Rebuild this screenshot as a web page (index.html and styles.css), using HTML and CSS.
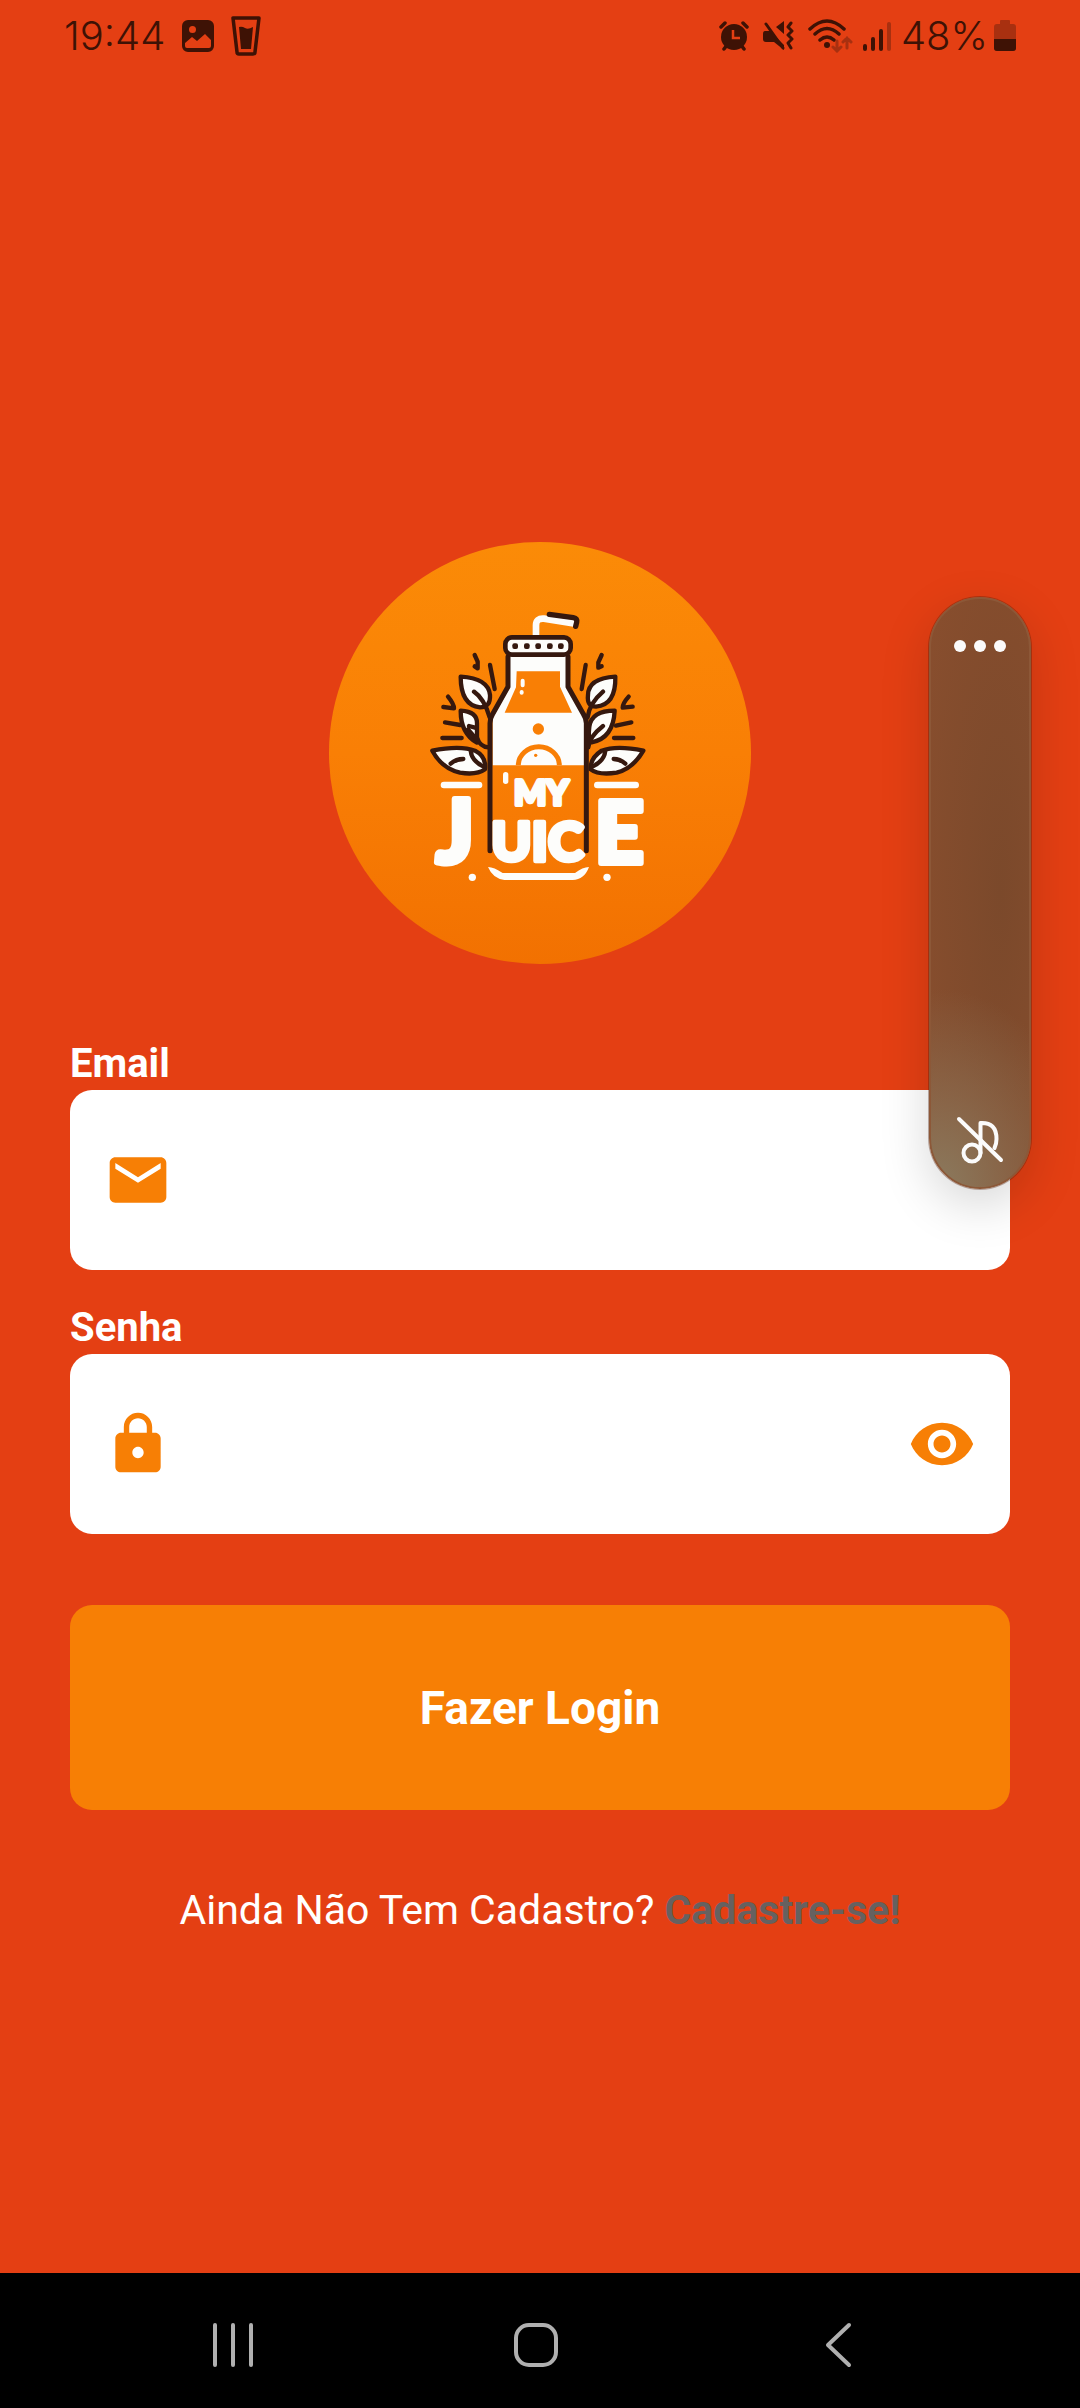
FILE: index.html
```html
<!DOCTYPE html>
<html lang="pt-BR">
<head>
<meta charset="utf-8">
<meta name="viewport" content="width=device-width, initial-scale=1">
<title>My Juice - Login</title>
<link rel="stylesheet" href="styles.css">
</head>
<body>
<div class="screen">
  <header class="status">
    <div class="status-left">
      <span class="status-text">19:44</span>
      <svg width="32" height="32" viewBox="0 0 32 32"><path fill="#3e1205" fill-rule="evenodd" d="M6 0h20a6 6 0 0 1 6 6v20a6 6 0 0 1-6 6H6a6 6 0 0 1-6-6V6a6 6 0 0 1 6-6zM10.500 6a3.500 3.500 0 1 0 0 7a3.500 3.500 0 0 0 0-7zM3 23v3q0 2 2 2h22q2 0 2-2v-6l-6-6l-8 7l-5-4z"/></svg>
      <svg width="30" height="40" viewBox="0 0 30 40"><path d="M2 2h26l-4 34q0 2-2 2H8q-2 0-2-2z" fill="none" stroke="#3e1205" stroke-width="3.500" stroke-linejoin="round"/><path fill="#3e1205" d="M8 11q3-1 6 1t8-1l-2 22h-10z"/></svg>
    </div>
    <div class="status-right">
      <svg width="30" height="30" viewBox="0 0 30 30"><g fill="none" stroke="#3e1205" stroke-width="3.500" stroke-linecap="round"><path d="M2 6l4-4M28 6l-4-4M5 28l3-4M25 28l-3-4"/></g><circle cx="15" cy="16" r="13" fill="#3e1205"/><path d="M14 9v8h7" fill="none" stroke="#e43f13" stroke-width="2.500"/></svg>
      <svg class="spaced" width="31" height="30" viewBox="0 0 31 30"><path fill="#3e1205" d="M2 10h5l14 14v5l-10-8H3q-3 0-3-3v-5q0-3 2-3zM13 6l8-6v13z"/><g fill="none" stroke="#3e1205" stroke-width="3" stroke-linecap="round" stroke-linejoin="round"><path d="M3 3l17 24M28 2l-3 4l4 4l-4 4l4 4l-4 4l3 5"/></g></svg>
      <svg class="spaced" width="45" height="34" viewBox="0 0 45 34"><g fill="none" stroke="#3e1205" stroke-width="3.500" stroke-linecap="round"><path d="M2 10q17-16 34 0M7 15q12-11 24 0M12 21q7-6 14 0"/></g><circle cx="19" cy="26" r="3" fill="#3e1205"/><g fill="none" stroke="#a83010" stroke-width="3" stroke-linecap="round"><path d="M29 22v10M25 28l4 4l4-4M39 29V19M35 23l4-4l4 4"/></g></svg>
      <svg width="28" height="31" viewBox="0 0 28 31"><g stroke="#3e1205" stroke-width="4" stroke-linecap="round"><path d="M2 25v3M10 18v10M18 10v18"/><path stroke="#a83010" d="M26 3v25"/></g></svg>
      <div class="battery">
        <span class="status-text">48%</span>
        <svg width="22" height="32" viewBox="0 0 22 32"><path fill="#a83010" d="M6 4V1q0-1 1-1h8q1 0 1 1v3h3q3 0 3 3v21q0 3-3 3H3q-3 0-3-3V7q0-3 3-3z"/><path fill="#3e1205" d="M0 19h22v9q0 3-3 3H3q-3 0-3-3z"/></svg>
      </div>
    </div>
  </header>

  <main class="login">
    <svg class="logo" viewBox="-273 -144 1266 1266" role="img" aria-label="My Juice">
      <defs><linearGradient id="orange" x1="0" y1="0" x2="0" y2="1"><stop offset="0" stop-color="#fb8b07"/><stop offset=".5" stop-color="#f97f05"/><stop offset="1" stop-color="#f27101"/></linearGradient></defs>
      <circle cx="360" cy="489" r="633" fill="url(#orange)"/>
      <path d="M348 140V106q0-22 24-20l94 15" fill="none" stroke="#fdfdfb" stroke-width="20"/>
      <path d="M388 73l72 10q12 2 10 14l-3 12" class="ink" stroke-width="16"/>
      <path d="M270 195V292L218 385V526H498V385L442 290V195z" fill="#fdfdfb"/>
      <path d="M290 244H420V290L456 368H254L288 292z" fill="#f97f05"/>
      <path d="M264 200V290L218 372Q210 385 210 400V782M444 200V290L490 372Q499 385 499 400V782" class="ink" stroke-width="15"/>
      <rect x="256" y="142" width="196" height="52" rx="20" fill="#fdfdfb" class="ink-line" stroke-width="14"/>
      <g fill="#35180f"><rect x="277" y="160" width="17" height="17" rx="6"/><rect x="312" y="160" width="17" height="17" rx="6"/><rect x="346" y="160" width="17" height="17" rx="6"/><rect x="381" y="160" width="17" height="17" rx="6"/><rect x="414" y="160" width="17" height="17" rx="6"/></g>
      <path d="M308 272v14M305 306v2" class="paper" stroke-width="12"/>
      <path d="M257 554v20" class="paper" stroke-width="16"/>
      <circle cx="355" cy="417" r="17" fill="#f97f05"/>
      <path d="M295 526a61 55 0 0 1 123 0" fill="none" stroke="#f97f05" stroke-width="15"/>
      <circle cx="347" cy="496" r="5" fill="#f97f05"/>
      <g class="ink" stroke-width="13">
        <path fill="#fdfdfb" d="M122 260Q205 265 210 315Q212 352 180 352Q122 345 122 260z"/>
        <path fill="#fdfdfb" d="M122 362Q172 365 171 400V458Q122 430 122 362z"/>
        <path fill="#fdfdfb" d="M37 482Q120 465 165 482Q200 500 195 538Q170 556 120 548Q65 535 37 482z"/>
        <path d="M162 305Q192 325 209 382M147 408l18 5M144 418l24 28M172 445Q180 470 205 472M92 521q16-14 38-14M152 482q3 32 40 48"/>
        <path d="M164 195l9 20v20l-9-6M210 225l14 72M84 320q18 22 18 35l-32-4M75 397l46 8M67 444h58"/>
        <path fill="#fdfdfb" d="M586 260Q505 265 504 315Q500 350 528 350Q588 345 586 260z"/>
        <path fill="#fdfdfb" d="M584 362Q515 362 508 410Q503 450 515 457Q580 445 584 362z"/>
        <path fill="#fdfdfb" d="M670 482Q590 465 545 482Q510 505 512 538Q535 556 590 548Q640 535 670 482z"/>
        <path d="M549 305Q508 340 503 382M549 408Q508 440 505 472M616 521q-16-14-35-14M556 482q-3 32-40 48"/>
        <path d="M545 195l-10 22v16l10-4M497 225l-12 72M626 320q-18 20-18 33l30-3M634 397l-46 10M640 444h-58"/>
      </g>
      <path d="M72 585H177M532 585H647" class="paper" stroke-width="20"/>
      <path d="M204 831Q222 831 248 849H465Q488 831 507 831Q493 869 458 870H253Q218 865 204 831z" fill="#fdfdfb"/>
      <circle cx="157" cy="862" r="11" fill="#fdfdfb"/><circle cx="561" cy="862" r="11" fill="#fdfdfb"/>
      <g class="brand">
        <text x="282" y="644" font-size="102" stroke-width="12">MY</text>
        <text x="48" y="820" font-size="264" stroke-width="18">J</text>
        <text x="214" y="812" font-size="162" stroke-width="14">UIC</text>
        <text x="524" y="820" font-size="256" stroke-width="18">E</text>
      </g>
    </svg>

    <form class="form">
      <label class="label" for="email">Email</label>
      <div class="field">
        <svg class="icon" viewBox="0 0 24 24"><path d="M20 4H4c-1.100 0-1.990.9-1.990 2L2 18c0 1.100.9 2 2 2h16c1.100 0 2-.9 2-2V6c0-1.100-.9-2-2-2zm0 4l-8 5-8-5V6l8 5 8-5v2z"/></svg>
        <input class="input" id="email" type="email">
      </div>
      <label class="label label-next" for="senha">Senha</label>
      <div class="field">
        <svg class="icon" viewBox="0 0 24 24"><path d="M18 8h-1V6c0-2.760-2.240-5-5-5S7 3.240 7 6v2H6c-1.100 0-2 .9-2 2v10c0 1.100.9 2 2 2h12c1.100 0 2-.9 2-2V10c0-1.100-.9-2-2-2zm-6 9c-1.100 0-2-.9-2-2s.9-2 2-2 2 .9 2 2-.9 2-2 2zm3.100-9H8.900V6c0-1.710 1.390-3.100 3.100-3.100 1.710 0 3.100 1.390 3.100 3.100v2z"/></svg>
        <input class="input" id="senha" type="password">
        <button class="plain" type="button" aria-label="Mostrar senha"><svg class="icon" viewBox="0 0 24 24"><path d="M12 4.500C7 4.500 2.730 7.610 1 12c1.730 4.390 6 7.500 11 7.500s9.270-3.110 11-7.500c-1.730-4.390-6-7.500-11-7.500zM12 17c-2.760 0-5-2.240-5-5s2.240-5 5-5 5 2.240 5 5-2.240 5-5 5zm0-8c-1.660 0-3 1.340-3 3s1.340 3 3 3 3-1.340 3-3-1.340-3-3-3z"/></svg></button>
      </div>
      <button class="submit" type="submit">Fazer Login</button>
      <p class="register">Ainda Não Tem Cadastro? <a class="register-link" href="#cadastro">Cadastre-se!</a></p>
    </form>
  </main>

  <nav class="navbar">
    <button class="plain nav-btn" type="button" aria-label="Recentes"><svg width="48" height="48" viewBox="0 0 48 48"><path d="M6 4v40M24 4v40M42 4v40"/></svg></button>
    <button class="plain nav-btn" type="button" aria-label="Início"><svg width="48" height="48" viewBox="0 0 48 48"><rect x="4" y="4" width="40" height="40" rx="13"/></svg></button>
    <button class="plain nav-btn" type="button" aria-label="Voltar"><svg width="48" height="48" viewBox="0 0 48 48"><path d="M35 4L14 24L35 44"/></svg></button>
  </nav>

  <aside class="volume" aria-label="Volume">
    <button class="plain" type="button" aria-label="Mais opções"><svg width="52" height="12" viewBox="0 0 52 12" fill="#fbfbfb"><circle cx="6" cy="6" r="6"/><circle cx="26" cy="6" r="6"/><circle cx="46" cy="6" r="6"/></svg></button>
    <button class="plain" type="button" aria-label="Som desativado"><svg width="48" height="48" viewBox="0 0 48 48" fill="none" stroke="#fbfbfb" stroke-width="4" stroke-linecap="round" stroke-linejoin="round"><path d="M3 3l42 41"/><circle cx="16" cy="37" r="8.500"/><path d="M24.500 37V7q16-1 16 16q0 5-2 9"/></svg></button>
  </aside>
</div>
</body>
</html>
```
FILE: styles.css
```css
* { box-sizing: border-box; }

body {
  margin: 0;
  background: #e43f13;
  color: #fff;
  font-family: Roboto, sans-serif;
}

.screen {
  position: relative;
  display: flex;
  flex-direction: column;
  min-height: 100vh;
}

.plain {
  display: flex;
  padding: 0;
  border: 0;
  background: none;
}

/* Status bar */
.status {
  display: flex;
  justify-content: space-between;
  height: 72px;
  padding: 0 64px;
  color: #3e1205;
}

.status-left,
.status-right,
.battery {
  display: flex;
  align-items: center;
}

.status-left { gap: 17px; }
.status-right { gap: 10px; }
.battery { gap: 6px; }
.spaced { margin-left: 4px; }

.status-text {
  font: 300 40px/40px Inter, sans-serif;
}

/* Login */
.login {
  flex: 1;
  display: flex;
  flex-direction: column;
  align-items: center;
  padding: 470px 70px 40px;
}

.logo {
  width: 422px;
  height: 422px;
}

.ink,
.ink-line {
  stroke: #35180f;
  stroke-linecap: round;
  stroke-linejoin: round;
}

.ink { fill: none; }

.paper {
  fill: none;
  stroke: #fdfdfb;
  stroke-linecap: round;
}

.brand {
  fill: #fdfdfb;
  stroke: #fdfdfb;
  stroke-linejoin: round;
  font-family: Lato, sans-serif;
  font-weight: 900;
}

.form {
  display: flex;
  flex-direction: column;
  width: 100%;
  margin-top: 76px;
}

.label {
  padding-bottom: 2px;
  font-size: 40px;
  font-weight: 700;
  line-height: 48px;
}

.label-next { margin-top: 34px; }

.field {
  display: flex;
  align-items: center;
  gap: 20px;
  height: 180px;
  padding: 0 34px;
  border-radius: 22px;
  background: #fff;
}

.icon {
  width: 68px;
  height: 68px;
  fill: #f77f05;
}

.input {
  flex: 1;
  min-width: 0;
  height: 100%;
  padding: 0;
  border: 0;
  outline: 0;
  background: none;
  color: #333;
  font: 40px Roboto, sans-serif;
}

.submit {
  height: 205px;
  margin-top: 71px;
  border: 0;
  border-radius: 22px;
  background: #f77f05;
  color: #fff;
  font: 700 46px/56px Roboto, sans-serif;
}

.register {
  margin: 76px 0 0;
  font-size: 41px;
  line-height: 48px;
  text-align: center;
}

.register-link {
  color: #666160;
  font-weight: 700;
  text-decoration: none;
}

/* System navigation */
.navbar {
  display: flex;
  align-items: center;
  justify-content: space-between;
  height: 135px;
  padding: 8px 192px 0 183px;
  background: #000;
}

.nav-btn {
  justify-content: center;
  width: 100px;
}

.nav-btn svg {
  fill: none;
  stroke: #b0b0b0;
  stroke-width: 4;
  stroke-linecap: round;
  stroke-linejoin: round;
}

/* Volume overlay */
.volume {
  position: absolute;
  top: 597px;
  right: 49px;
  display: flex;
  flex-direction: column;
  align-items: center;
  justify-content: space-between;
  width: 102px;
  height: 592px;
  padding: 41px 0 23px;
  border: 2px solid #8c5838;
  border-radius: 51px;
  background:
    radial-gradient(ellipse 150px 200px at 10% 100%, #8b7a5e, rgba(139, 112, 84, 0.6) 50%, transparent),
    radial-gradient(ellipse 90px 420px at 70% 50%, #7b492b, #884e2e);
  background-origin: border-box;
  box-shadow: 0 0 0 1px rgba(80, 30, 10, 0.35), 0 16px 50px rgba(0, 0, 0, 0.16);
}
```
